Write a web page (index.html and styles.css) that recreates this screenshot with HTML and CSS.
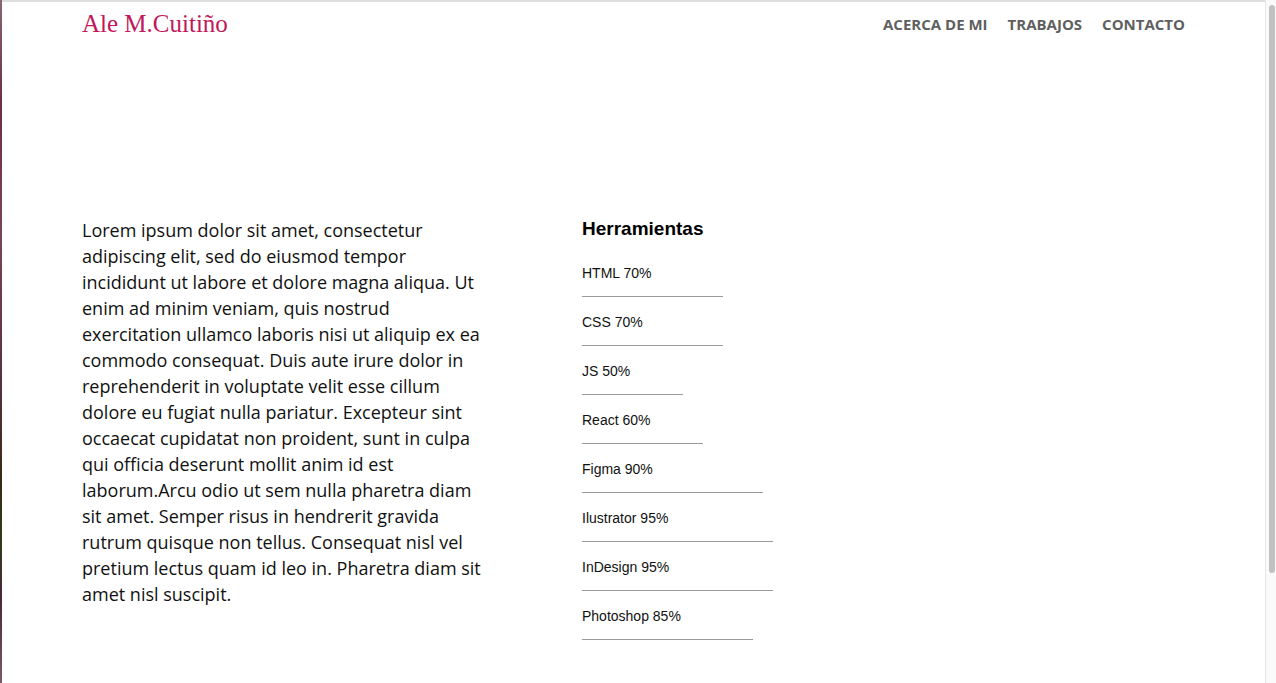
FILE: index.html
```
<!DOCTYPE html>
<html lang="es">
<head>
<meta charset="utf-8">
<title>Ale M.Cuitiño</title>
<link rel="stylesheet" href="styles.css">
</head>
<body>
<div class="strip"></div>
<div class="page">
  <header class="header">
    <div class="logo">Ale M.Cuitiño</div>
    <nav class="nav">
      <a href="#">ACERCA DE MI</a>
      <a href="#">TRABAJOS</a>
      <a href="#">CONTACTO</a>
    </nav>
  </header>
  <main class="about">
    <p class="bio">Lorem ipsum dolor sit amet, consectetur adipiscing elit, sed do eiusmod tempor incididunt ut labore et dolore magna aliqua. Ut enim ad minim veniam, quis nostrud exercitation ullamco laboris nisi ut aliquip ex ea commodo consequat. Duis aute irure dolor in reprehenderit in voluptate velit esse cillum dolore eu fugiat nulla pariatur. Excepteur sint occaecat cupidatat non proident, sunt in culpa qui officia deserunt mollit anim id est laborum.Arcu odio ut sem nulla pharetra diam sit amet. Semper risus in hendrerit gravida rutrum quisque non tellus. Consequat nisl vel pretium lectus quam id leo in. Pharetra diam sit amet nisl suscipit.</p>
    <section class="tools">
      <h2 class="tools-title">Herramientas</h2>
      <div class="tool" style="width:141px">HTML 70%</div>
      <div class="tool" style="width:141px">CSS 70%</div>
      <div class="tool" style="width:101px">JS 50%</div>
      <div class="tool" style="width:121px">React 60%</div>
      <div class="tool" style="width:181px">Figma 90%</div>
      <div class="tool" style="width:191px">Ilustrator 95%</div>
      <div class="tool" style="width:191px">InDesign 95%</div>
      <div class="tool" style="width:171px">Photoshop 85%</div>
    </section>
  </main>
</div>
<div class="scrollbar"><div class="thumb"></div></div>
</body>
</html>
```
FILE: styles.css
```
html, body {
  margin: 0;
  height: 100%;
  overflow: hidden;
}
body {
  display: flex;
  background: #fff;
  color: #111;
}
.strip {
  width: 2px;
  flex: none;
  background: linear-gradient(to bottom, #8a6672 0%, #6b2f48 15%, #7a4458 35%, #5a3240 55%, #3a2a14 70%, #2f3a18 78%, #4a2a38 88%, #7a5a66 100%);
}
.page {
  flex: 1;
  border-top: 2px solid #dedede;
  min-width: 0;
}
.header {
  display: flex;
  justify-content: space-between;
  align-items: center;
  padding: 8px 80px 0 80px;
}
.logo {
  font-family: "Liberation Serif", "Times New Roman", serif;
  font-size: 25px;
  line-height: 28px;
  color: #c2185b;
}
.nav {
  display: flex;
  gap: 20px;
}
.nav a {
  font-family: "Open Sans", sans-serif;
  font-weight: 700;
  font-size: 15px;
  line-height: 28px;
  color: #5f5f5f;
  text-decoration: none;
}
.about {
  display: flex;
  padding: 179px 0 0 80px;
}
.bio {
  width: 405px;
  margin: 0 95px 0 0;
  font-family: "Open Sans", sans-serif;
  font-size: 18px;
  line-height: 26px;
  color: #111;
}
.tools {
  font-family: "Liberation Sans", Arial, sans-serif;
}
.tools-title {
  margin: 1px 0 25px;
  font-size: 19px;
  line-height: 22px;
  font-weight: 700;
  color: #000;
}
.tool {
  margin-top: 17px;
  padding-bottom: 15px;
  font-size: 14px;
  line-height: 16px;
  color: #111;
  border-bottom: 1px solid #9a9a9a;
}
.scrollbar {
  box-sizing: border-box;
  width: 11px;
  flex: none;
  background: #fafafa;
  border-left: 1px solid #e6e6e6;
  padding: 5px 1px 0 3px;
}
.thumb {
  height: 568px;
  background: #c1c1c1;
  border-radius: 4px;
}
```
